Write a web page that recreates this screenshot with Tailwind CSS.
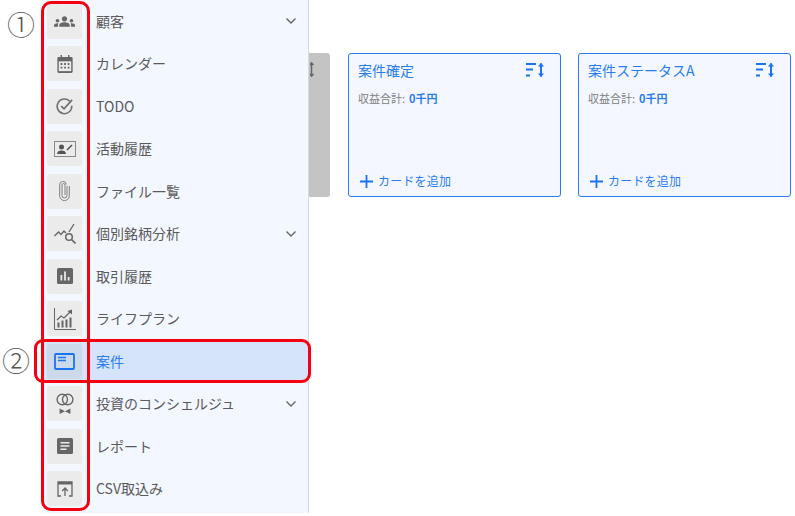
<!DOCTYPE html>
<html lang="ja">
<head>
  <meta charset="UTF-8">
  <title>案件</title>
  <script src="https://cdn.jsdelivr.net/npm/@tailwindcss/browser@4"></script>
</head>
<body class="relative w-[795px] h-[516px] overflow-hidden bg-white font-['Noto_Sans_CJK_JP','Noto_Sans',sans-serif]">
  <div class="flex items-start">
    <!-- サイドメニュー -->
    <nav class="ml-[42px] w-[267px] h-[513px] shrink-0 bg-[#f3f7ff] border-r border-[#d5d9e0] pt-[3.5px] text-[14px] text-[#5a5a5a]">
      <div class="flex items-center h-[35px] mb-[7.5px]">
        <span class="flex items-center justify-center ml-[5px] w-[35px] h-[35px] rounded-[3px] bg-[#ebebeb]">
          <svg class="w-[21px] h-[21px]" viewBox="0 0 24 24" fill="#666"><path d="M4 13c1.1 0 2-.9 2-2s-.9-2-2-2-2 .9-2 2 .9 2 2 2zm1.13 1.1c-.37-.06-.74-.1-1.13-.1-.99 0-1.93.21-2.78.58C.48 14.9 0 15.62 0 16.43V18h4.500v-1.61c0-.83.23-1.61.63-2.29zM20 13c1.1 0 2-.9 2-2s-.9-2-2-2-2 .9-2 2 .9 2 2 2zm4 3.43c0-.81-.48-1.53-1.22-1.85-.85-.37-1.79-.58-2.78-.58-.39 0-.76.04-1.13.1.4.68.63 1.46.63 2.29V18H24v-1.57zm-7.76-2.78c-1.17-.52-2.61-.9-4.24-.9-1.63 0-3.07.39-4.24.9C6.68 14.13 6 15.21 6 16.39V18h12v-1.61c0-1.18-.68-2.26-1.76-2.74zM12 12c1.66 0 3-1.34 3-3s-1.34-3-3-3-3 1.34-3 3 1.34 3 3 3z"/></svg>
        </span>
        <span class="ml-[14px]">顧客</span>
        <svg class="ml-auto mr-[10px] w-[14px] h-[14px]" viewBox="0 0 14 14" fill="none" stroke="#666" stroke-width="1.4"><path d="M2.500 4.500 7 9l4.500-4.500"/></svg>
      </div>
      <div class="flex items-center h-[35px] mb-[7.5px]">
        <span class="flex items-center justify-center ml-[5px] w-[35px] h-[35px] rounded-[3px] bg-[#ebebeb]">
          <svg class="w-[16px] h-[18px]" viewBox="0 0 18 20" fill="#666"><path d="M4 0h1.600v2h6.800V0H14v2h2a1.600 1.600 0 0 1 1.600 1.600v14.800A1.600 1.600 0 0 1 16 20H2a1.600 1.600 0 0 1-1.600-1.600V3.600A1.600 1.600 0 0 1 2 2h2z"/><rect x="2" y="7" width="14" height="11" fill="#ebebeb"/><path d="M4 9h2v2H4zM8 9h2v2H8zM12 9h2v2h-2zM4 13h2v2H4zM8 13h2v2H8zM12 13h2v2h-2z"/></svg>
        </span>
        <span class="ml-[14px]">カレンダー</span>
      </div>
      <div class="flex items-center h-[35px] mb-[7.5px]">
        <span class="flex items-center justify-center ml-[5px] w-[35px] h-[35px] rounded-[3px] bg-[#ebebeb]">
          <svg class="w-[19px] h-[19px]" viewBox="0 0 20 20" fill="none" stroke="#707070" stroke-width="1.6"><path d="M15.500 4.500A7.700 7.700 0 1 0 17.600 9"/><path d="m6.500 9.500 3 3 8.500-9.500" stroke-width="1.800"/></svg>
        </span>
        <span class="ml-[14px]">TODO</span>
      </div>
      <div class="flex items-center h-[35px] mb-[7.5px]">
        <span class="flex items-center justify-center ml-[5px] w-[35px] h-[35px] rounded-[3px] bg-[#ebebeb]">
          <svg class="w-[22px] h-[16px]" viewBox="0 0 22 16" fill="none"><rect x=".5" y=".5" width="21" height="15" stroke="#888"/><circle cx="7.500" cy="6" r="2.500" fill="#555"/><path d="M3 13c0-2.500 2-3.500 4.500-3.500S12 10.500 12 13z" fill="#555"/><path d="m13 9 5-5" stroke="#555" stroke-width="1.600"/></svg>
        </span>
        <span class="ml-[14px]">活動履歴</span>
      </div>
      <div class="flex items-center h-[35px] mb-[7.5px]">
        <span class="flex items-center justify-center ml-[5px] w-[35px] h-[35px] rounded-[3px] bg-[#ebebeb]">
          <svg class="w-[11px] h-[20px]" viewBox="0 0 11 20" fill="none" stroke="#808080" stroke-width="1"><path d="M8 5v9.500a2.500 2.500 0 0 1-5 0V4a1.500 1.500 0 0 1 3 0v10M10.300 5v9.800a4.800 4.800 0 0 1-9.600 0V4a3.300 3.300 0 0 1 6.600-.6"/></svg>
        </span>
        <span class="ml-[14px]">ファイル一覧</span>
      </div>
      <div class="flex items-center h-[35px] mb-[7.5px]">
        <span class="flex items-center justify-center ml-[5px] w-[35px] h-[35px] rounded-[3px] bg-[#ebebeb]">
          <svg class="w-[22px] h-[20px]" viewBox="0 0 22 20" fill="none" stroke="#666" stroke-width="1.300"><path d="m.5 12 4-4 2.500 2.500L10 7l2 2"/><path d="M15 8 20 0"/><circle cx="15" cy="13" r="3.300" stroke-width="1.500"/><path d="m17.500 15.500 4 4" stroke-width="1.600"/></svg>
        </span>
        <span class="ml-[14px]">個別銘柄分析</span>
        <svg class="ml-auto mr-[10px] w-[14px] h-[14px]" viewBox="0 0 14 14" fill="none" stroke="#666" stroke-width="1.4"><path d="M2.500 4.500 7 9l4.500-4.500"/></svg>
      </div>
      <div class="flex items-center h-[35px] mb-[7.5px]">
        <span class="flex items-center justify-center ml-[5px] w-[35px] h-[35px] rounded-[3px] bg-[#ebebeb]">
          <svg class="w-[16px] h-[16px]" viewBox="0 0 16 16"><rect width="16" height="16" rx="1.500" fill="#666"/><path d="M3.500 7h1.800v5.500H3.500zM7.100 3.500h1.800v9H7.100zM10.700 9h1.800v3.500h-1.800z" fill="#ebebeb"/></svg>
        </span>
        <span class="ml-[14px]">取引履歴</span>
      </div>
      <div class="flex items-center h-[35px] mb-[3.5px]">
        <span class="flex items-center justify-center ml-[5px] w-[35px] h-[35px] rounded-[3px] bg-[#ebebeb]">
          <svg class="w-[22px] h-[22px]" viewBox="0 0 22 22" fill="none"><path d="M.5 0v21.500H22" stroke="#666"/><path d="M3.500 19.500v-5h2v5zM7.500 19.500v-7h2v7zM11.500 19.500v-8h2v8zM15.500 19.500v-10h2v10z" fill="#666"/><path d="m3 12 4-4 3 2 6-6" stroke="#666" stroke-width="1.300"/><path d="m13.500 3 4.500-1.500v5z" fill="#666"/></svg>
        </span>
        <span class="ml-[14px]">ライフプラン</span>
      </div>
      <!-- 選択中 -->
      <div class="flex items-center h-[43px] mb-[3.5px] bg-[#d6e4fb] text-[#2a7df0]">
        <span class="flex items-center justify-center ml-[5px] w-[35px] h-[35px] rounded-[3px] bg-[#ccd9ec]">
          <svg class="w-[21px] h-[17px]" viewBox="0 0 21 17" fill="none"><rect x="1" y="1" width="19" height="15" rx="1" stroke="#1a73f0" stroke-width="1.800"/><path d="M4 4.500h8M4 7.500h8" stroke="#1a73f0" stroke-width="1.500"/></svg>
        </span>
        <span class="ml-[14px]">案件</span>
      </div>
      <div class="flex items-center h-[35px] mb-[7.5px]">
        <span class="flex items-center justify-center ml-[5px] w-[35px] h-[35px] rounded-[3px] bg-[#ebebeb]">
          <svg class="w-[18px] h-[24px]" viewBox="0 0 20 24" fill="none"><circle cx="7" cy="7" r="5.800" stroke="#666" stroke-width="1.500"/><circle cx="13" cy="7" r="5.800" stroke="#666" stroke-width="1.500"/><path d="M4 17v6l6-3zM16 17v6l-6-3z" fill="#666"/></svg>
        </span>
        <span class="ml-[14px]">投資のコンシェルジュ</span>
        <svg class="ml-auto mr-[10px] w-[14px] h-[14px]" viewBox="0 0 14 14" fill="none" stroke="#666" stroke-width="1.4"><path d="M2.500 4.500 7 9l4.500-4.500"/></svg>
      </div>
      <div class="flex items-center h-[35px] mb-[7.5px]">
        <span class="flex items-center justify-center ml-[5px] w-[35px] h-[35px] rounded-[3px] bg-[#ebebeb]">
          <svg class="w-[16px] h-[16px]" viewBox="0 0 16 16"><rect width="16" height="16" rx="1.500" fill="#666"/><path d="M3.500 4h9v1.500h-9zM3.500 7.300h9v1.500h-9zM3.500 10.600h6v1.500h-6z" fill="#ebebeb"/></svg>
        </span>
        <span class="ml-[14px]">レポート</span>
      </div>
      <div class="flex items-center h-[35px]">
        <span class="flex items-center justify-center ml-[5px] w-[35px] h-[35px] rounded-[3px] bg-[#ebebeb]">
          <svg class="w-[16px] h-[16px]" viewBox="0 0 16 16" fill="none"><path d="M4 15H1V1h14v14h-3" stroke="#666" stroke-width="1.300"/><path d="M1 1h14v2.500H1z" fill="#666"/><path d="M8 15V7.500M5.200 10 8 7l2.800 3" stroke="#666" stroke-width="1.300"/></svg>
        </span>
        <span class="ml-[14px]">CSV取込み</span>
      </div>
    </nav>

    <!-- カンバン -->
    <main class="flex items-start pt-[53px]">
      <div class="w-[21px] h-[144px] rounded-r-[3px] bg-[#c4c4c4] pt-[9px] pl-[1px]">
        <svg class="w-[4px] h-[15px]" viewBox="0 0 4 15" fill="none" stroke="#666" stroke-width="1.500"><path d="M1.500 0v15M0 3l1.500-2L3.500 3M0 12l1.500 2L3.500 12"/></svg>
      </div>
      <section class="ml-[18px] flex flex-col w-[213px] h-[144px] rounded-[3px] border border-[#2a7df0] bg-[#f4f7ff] px-[9px] text-[#2a7df0]">
        <div class="flex items-center justify-between mt-[7px] h-[19px]">
          <h3 class="text-[14px] leading-[19px]">案件確定</h3>
          <svg class="mr-[6px] mt-[-1px] w-[19px] h-[16px]" viewBox="0 0 19 16" fill="none" stroke="#1a73f0"><path d="M0 2h10M0 7.500h7M0 13.500h4" stroke-width="1.800"/><path d="M15 1.500v13" stroke-width="2"/><path d="M12 4.500 15 .8l3 3.700zM12 11.500l3 3.700 3-3.700z" fill="#1a73f0" stroke="none"/></svg>
        </div>
        <p class="mt-[11px] text-[11px] leading-[14px] text-[#808080]">収益合計:<b class="ml-[4px] font-bold text-[#2a7df0]">0千円</b></p>
        <div class="mt-auto mb-[7px] flex items-center pl-[2px] text-[12px] leading-[16px]">
          <svg class="w-[13px] h-[13px]" viewBox="0 0 13 13" stroke="#1a73f0" stroke-width="1.800"><path d="M6.500 0v13M0 6.500h13"/></svg>
          <span class="ml-[5px] tracking-[.2px]">カードを追加</span>
        </div>
      </section>
      <section class="ml-[17px] flex flex-col w-[213px] h-[144px] rounded-[3px] border border-[#2a7df0] bg-[#f4f7ff] px-[9px] text-[#2a7df0]">
        <div class="flex items-center justify-between mt-[7px] h-[19px]">
          <h3 class="text-[14px] leading-[19px]">案件ステータスA</h3>
          <svg class="mr-[6px] mt-[-1px] w-[19px] h-[16px]" viewBox="0 0 19 16" fill="none" stroke="#1a73f0"><path d="M0 2h10M0 7.500h7M0 13.500h4" stroke-width="1.800"/><path d="M15 1.500v13" stroke-width="2"/><path d="M12 4.500 15 .8l3 3.700zM12 11.500l3 3.700 3-3.700z" fill="#1a73f0" stroke="none"/></svg>
        </div>
        <p class="mt-[11px] text-[11px] leading-[14px] text-[#808080]">収益合計:<b class="ml-[4px] font-bold text-[#2a7df0]">0千円</b></p>
        <div class="mt-auto mb-[7px] flex items-center pl-[2px] text-[12px] leading-[16px]">
          <svg class="w-[13px] h-[13px]" viewBox="0 0 13 13" stroke="#1a73f0" stroke-width="1.800"><path d="M6.500 0v13M0 6.500h13"/></svg>
          <span class="ml-[5px] tracking-[.2px]">カードを追加</span>
        </div>
      </section>
    </main>
  </div>

  <!-- 赤枠の注釈 -->
  <div class="absolute left-[40.5px] top-[1px] w-[49.5px] h-[510px] rounded-[10px] border-[3.5px] border-[#f50010]"></div>
  <div class="absolute left-[34px] top-[339px] w-[277px] h-[44px] rounded-[9px] border-[3.5px] border-[#f50010]"></div>
  <span class="absolute left-[7px] top-[4px] text-[28px] leading-[40px] font-light text-[#555]">①</span>
  <span class="absolute left-[2px] top-[340px] text-[28px] leading-[40px] font-light text-[#555]">②</span>
</body>
</html>
